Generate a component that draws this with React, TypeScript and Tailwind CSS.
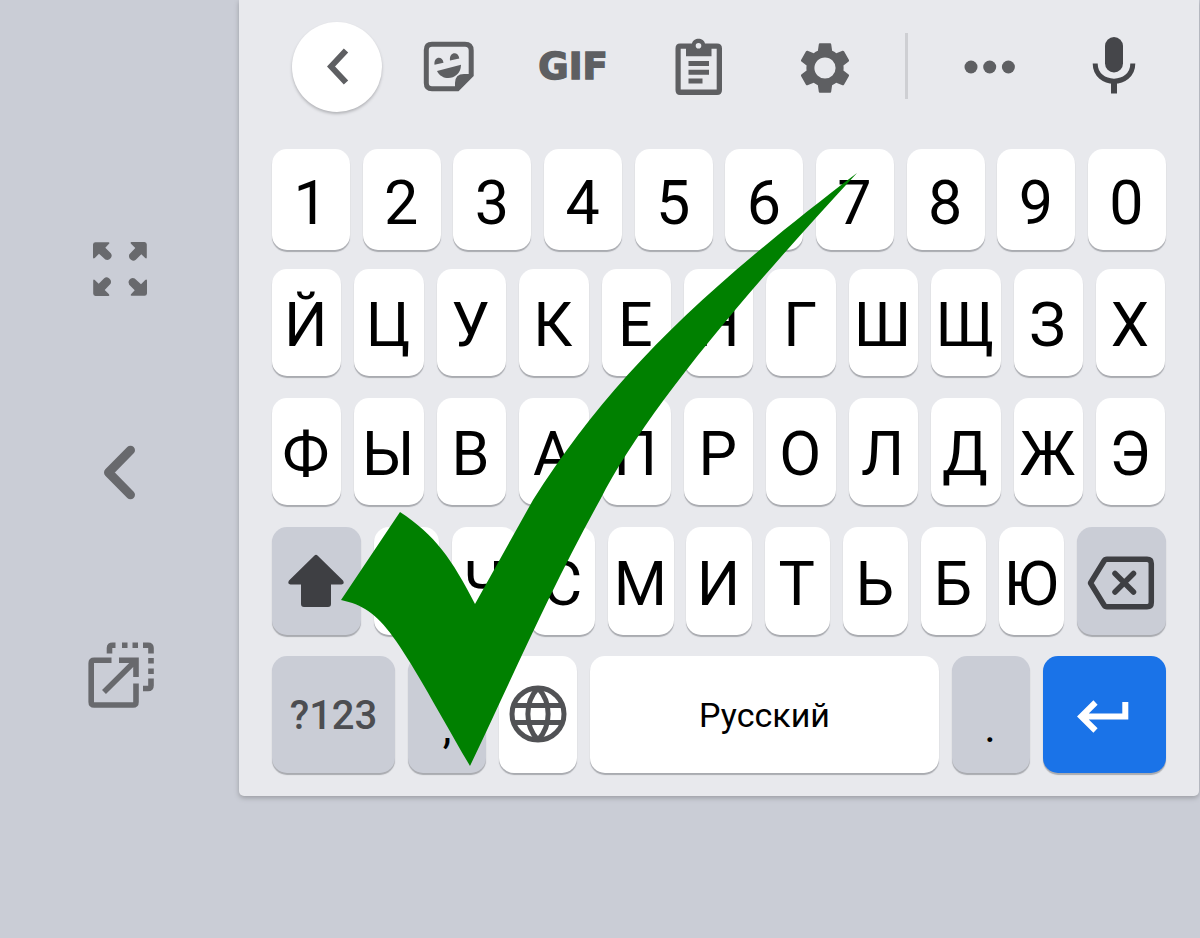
import React from "react";

interface KeyProps {
  children?: React.ReactNode;
  className?: string;
}

const Key: React.FC<KeyProps> = ({ children, className = "flex-1 bg-white" }) => (
  <div
    className={`flex items-center justify-center min-w-0 rounded-[15px] shadow-[0_2px_1px_#a9abb0] whitespace-nowrap ${className}`}
  >
    {children}
  </div>
);

const LetterRow: React.FC<{ letters: string; offset?: string }> = ({ letters, offset = "pt-[7px] pr-px" }) => (
  <>
    {letters.split("").map((letter) => (
      <Key key={letter}>
        <span className={offset}>{letter}</span>
      </Key>
    ))}
  </>
);

const SideRail = () => (
  <div className="w-[239px] h-[796px] shrink-0 flex flex-col items-center pt-[241px] text-[#68696d]">
    <svg className="w-[56px] h-[56px]" viewBox="0 0 56 56" fill="currentColor">
      {["", "rotate(90 28 28)", "rotate(180 28 28)", "rotate(270 28 28)"].map((turn) => (
        <g key={turn} transform={turn}>
          <path d="M3.5 1.2H16.500Q18 1.500 17 2.800L13.300 6.700L18.800 12.200Q20.600 14.500 18.800 17Q16.500 20 13.300 18.600L7 12.700L2.800 17Q1.300 18 1 16.500V3.500Q1.200 1.200 3.500 1.200Z" />
        </g>
      ))}
    </svg>
    <svg className="w-[34px] h-[56px] mt-[148px] mr-[2px]" viewBox="0 0 34 56" fill="none" stroke="currentColor" strokeWidth="9" strokeLinecap="round" strokeLinejoin="round">
      <path d="M28.5 5.2L6.5 27.5L28.5 49.8" />
    </svg>
    <svg className="w-[68px] h-[68px] mt-[140px] ml-[2px]" viewBox="0 0 68 68" fill="none" stroke="currentColor" strokeWidth="5.6">
      <path d="M24.500 19.200H7.200Q4.200 19.200 4.200 22.200V61Q4.200 64 7.200 64H46Q49 64 49 61V42.500" />
      <path d="M32 19.200H49V36M49 19.200L17 51" />
      <path d="M22.500 12.500V7Q22.500 4.200 25.500 4.200H28.500M35 4.200H40.500M45.500 4.200H51M56 4.200H61Q64 4.200 64 7V12.500M64 17V22.500M64 27.500V33M64 37.500V44.500Q64 47.500 61 47.500H56" />
    </svg>
  </div>
);

const Toolbar = () => (
  <div className="h-[149px] flex items-start pl-[53px] text-[#5e5f62]">
    <div className="w-[90px] h-[90px] mt-[22px] rounded-full bg-white shadow-[0_2px_3px_#b4b5b9] flex items-center justify-center pl-[2px]">
      <svg className="w-[22px] h-[38px]" viewBox="0 0 22 38" fill="none" stroke="currentColor" strokeWidth="6">
        <path d="M19 2.500L4 18.500L19 34.500" />
      </svg>
    </div>
    <svg className="w-[52px] h-[52px] mt-[41px] ml-[41px]" viewBox="0 0 52 52" fill="currentColor">
      <path
        d="M9 3.300H42Q48.200 3.300 48.200 9.500V34L34.500 47.700H9Q3.300 47.700 3.300 42V9Q3.300 3.300 9 3.300Z"
        fill="none"
        stroke="currentColor"
        strokeWidth="5"
      />
      <path d="M32 49V42Q32 33 41 33H49L34 49Z" />
      <path d="M11.500 23.800C10.500 15 19.800 14.500 20.500 21.800ZM27 19.500C26 10.500 35.500 10 36.300 17.500Z" />
      <path d="M14 30L38 23.800C38 38 20 42 14 30Z" />
    </svg>
    <div className="w-[74px] h-[44px] mt-[44px] ml-[61px] flex items-center justify-center font-['DejaVu_Sans'] font-bold text-[37px] leading-none [-webkit-text-stroke:1.5px_#5e5f62]">
      GIF
    </div>
    <svg className="w-[48px] h-[58px] mt-[38px] ml-[65px]" viewBox="0 0 48 58" fill="currentColor">
      <path
        fillRule="evenodd"
        d="M5 5.500H17C18 -1 29 -1 30 5.500H42Q47 5.500 47 10.500V52Q47 57 42 57H5Q.500 57 .500 52V10.500Q.500 5.500 5 5.500ZM5.700 10.700V51.500H41.700V10.700H36.500V18.300H11V10.700ZM23.500 5A2.800 2.800 0 1 0 23.500 10.600A2.800 2.800 0 1 0 23.500 5Z"
      />
      <path d="M13.500 23H34V28H13.500ZM13.500 31.800H34V36.800H13.500ZM13.500 40.500H27.500V45.500H13.500Z" />
    </svg>
    <svg className="w-[62px] h-[62px] mt-[37px] ml-[71px]" viewBox="0 0 24 24" fill="currentColor">
      <path d="M19.140 12.940c.04-.3.060-.610.060-.940 0-.320-.020-.640-.070-.940l2.030-1.580c.180-.140.230-.410.120-.610l-1.920-3.320c-.120-.220-.370-.290-.590-.220l-2.390.960c-.5-.380-1.030-.7-1.620-.940l-.360-2.540c-.04-.240-.240-.410-.480-.410h-3.840c-.240 0-.430.170-.470.410l-.360 2.540c-.590.240-1.130.570-1.620.940l-2.390-.960c-.220-.080-.470 0-.590.220L2.740 8.870c-.120.210-.080.470.120.610l2.030 1.580c-.050.3-.090.630-.090.940s.020.640.070.940l-2.030 1.580c-.180.140-.230.410-.120.610l1.920 3.320c.120.220.370.290.590.220l2.390-.960c.5.380 1.030.7 1.620.940l.360 2.540c.050.240.240.410.480.410h3.840c.240 0 .440-.170.470-.410l.360-2.540c.590-.240 1.130-.560 1.620-.940l2.390.960c.220.080.470 0 .590-.220l1.920-3.320c.120-.220.070-.470-.120-.610l-2.010-1.580zM12 16.100a4.100 4.100 0 1 1 0-8.200 4.100 4.100 0 0 1 0 8.200z" />
    </svg>
    <div className="w-[3px] h-[66px] mt-[33px] ml-[49px] bg-[#cecfd3]" />
    <svg className="w-[52px] h-[14px] mt-[60px] ml-[56px]" viewBox="0 0 52 14" fill="currentColor">
      <circle cx="7" cy="7" r="6.500" />
      <circle cx="25.700" cy="7" r="6.500" />
      <circle cx="44.400" cy="7" r="6.500" />
    </svg>
    <svg className="w-[44px] h-[58px] mt-[36px] ml-[76px] text-[#45464a]" viewBox="0 0 44 58" fill="currentColor">
      <rect x="13" y="1" width="18" height="35.500" rx="9" />
      <path d="M3.200 27.500C3.200 51 40.800 51 40.800 27.500" fill="none" stroke="currentColor" strokeWidth="5" />
      <path d="M22 45V57.500" stroke="currentColor" strokeWidth="6" />
    </svg>
  </div>
);

const ShiftIcon = () => (
  <svg className="w-[58px] h-[54px] mr-[2px]" viewBox="0 0 58 54" fill="#3e3f43">
    <path d="M27.500 1.500Q29 .2 30.500 1.500L56 26.500Q58 30 54.500 30.500H44V50Q44 53 41 53H17Q14 53 14 50V30.500H3.500Q0 30 2 26.500Z" />
  </svg>
);

const DeleteIcon = () => (
  <svg className="w-[68px] h-[54px] mr-[2px] mt-[4px]" viewBox="0 0 68 54" fill="none" stroke="#3e3f43" strokeWidth="5.500" strokeLinejoin="round">
    <path d="M20 3.200H60Q64.300 3.200 64.300 7.500V46.500Q64.300 50.800 60 50.800H20Q18 50.800 17 49L3.500 27L17 5Q18 3.200 20 3.200Z" />
    <path d="M28 17.500L46.500 36M46.500 17.500L28 36" strokeLinecap="round" />
  </svg>
);

const GlobeIcon = () => (
  <svg className="w-[58px] h-[58px] mr-px mb-[2px]" viewBox="0 0 58 58" fill="none" stroke="#515255" strokeWidth="5">
    <circle cx="29" cy="29" r="26" />
    <path d="M5 20.500H53M5 37.500H53M29 3C15.500 17 15.500 41 29 55M29 3C42.500 17 42.500 41 29 55" />
  </svg>
);

const EnterIcon = () => (
  <svg className="w-[52px] h-[34px] mr-[4px] mt-[4px]" viewBox="0 0 52 34" fill="none" stroke="white" strokeWidth="6">
    <path d="M48.300 2V16.500H4M18.500 2.500L4.300 16.500L18.500 30.500" />
  </svg>
);

export default function App() {
  return (
    <div className="relative w-[1200px] h-[938px] overflow-hidden bg-[#cacdd6] font-['Roboto','Noto_Sans',sans-serif] text-black">
      <div className="flex items-start">
        <SideRail />
        <div className="w-[960px] h-[796px] shrink-0 rounded-b-[5px] bg-[#e8e9ed] shadow-[0_2px_5px_#9b9da3]">
          <Toolbar />
          <div className="mx-[33px] text-[61px] leading-none">
            <div className="flex gap-[12.5px] h-[101px]">
              <LetterRow letters="1234567890" />
            </div>
            <div className="flex gap-[13px] h-[107px] mt-[19px] mr-[0.5px]">
              <LetterRow letters="ЙЦУКЕНГШЩЗХ" offset="pt-[5px] pr-[2px]" />
            </div>
            <div className="flex gap-[13px] h-[107px] mt-[22px] mr-[0.5px]">
              <LetterRow letters="ФЫВАПРОЛДЖЭ" offset="pt-[5px] pr-[2px]" />
            </div>
            <div className="flex gap-[12.8px] h-[108px] mt-[22px]">
              <Key className="w-[89px] bg-[#cacdd6]">
                <ShiftIcon />
              </Key>
              <LetterRow letters="ЯЧСМИТЬБЮ" />
              <Key className="w-[89px] bg-[#cacdd6]">
                <DeleteIcon />
              </Key>
            </div>
            <div className="flex gap-[13px] h-[117px] mt-[21px]">
              <Key className="w-[123px] bg-[#cacdd6] pt-[2px] text-[40px] font-medium text-[#4c4d51]">?123</Key>
              <Key className="w-[78px] bg-[#cacdd6] pt-[26px] text-[44px]">,</Key>
              <Key className="w-[78px] bg-white">
                <GlobeIcon />
              </Key>
              <Key className="flex-1 bg-white text-[34px]">Русский</Key>
              <Key className="w-[78px] bg-[#cacdd6] pt-[24px] pr-[2px] text-[44px]">.</Key>
              <Key className="w-[123px] bg-[#1a73e8]">
                <EnterIcon />
              </Key>
            </div>
          </div>
        </div>
      </div>
      {/* Check mark laid over the keyboard */}
      <svg className="absolute inset-0 w-[1200px] h-[938px]" viewBox="0 0 1200 938" fill="#008000">
        <path d="M341 600L400 512C435 535 452 559 475 604L533 500C608 382 695 296 857 173C730 310 642 418 600 500C550 590 515 672 470 766C395 635 384 609 341 600Z" />
      </svg>
    </div>
  );
}
